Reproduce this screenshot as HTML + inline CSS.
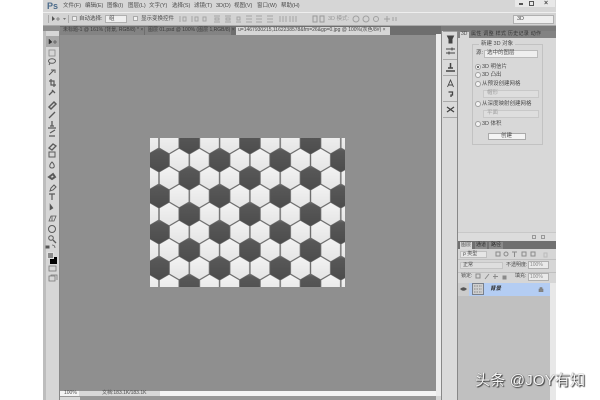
<!DOCTYPE html>
<html><head><meta charset="utf-8">
<style>
html,body{margin:0;padding:0;width:600px;height:400px;overflow:hidden;background:#fff}
body{position:relative;font-family:"Liberation Sans","Noto Sans CJK SC",sans-serif;color:#333}
div{position:absolute;box-sizing:border-box}
#app{left:0;top:0;width:600px;height:400px;filter:blur(.35px)}
.t{font-size:5.5px;line-height:7px;white-space:nowrap;color:#4a4a4a}
.r{width:6px;height:6px;border-radius:50%;background:#f2f2f2;border:1px solid #a0a0a0;left:475px}
</style></head><body>
<div id="app">
<div style="left:43px;top:0;width:513px;height:400px;background:#d6d6d6"></div>
<div class="t" style="left:47px;top:1px;font-size:9px;line-height:10px;font-weight:bold;color:#4a6a8a">Ps</div>
<div class="t" style="left:63px;top:3px">文件(F)</div>
<div class="t" style="left:85px;top:3px">编辑(E)</div>
<div class="t" style="left:107px;top:3px">图像(I)</div>
<div class="t" style="left:128px;top:3px">图层(L)</div>
<div class="t" style="left:149px;top:3px">文字(Y)</div>
<div class="t" style="left:172px;top:3px">选择(S)</div>
<div class="t" style="left:194px;top:3px">滤镜(T)</div>
<div class="t" style="left:216px;top:3px">3D(D)</div>
<div class="t" style="left:234px;top:3px">视图(V)</div>
<div class="t" style="left:257px;top:3px">窗口(W)</div>
<div class="t" style="left:281px;top:3px">帮助(H)</div>
<div style="left:515px;top:0;width:40px;height:7px;background:#e8e8e8"></div>
<div style="left:519px;top:3px;width:4px;height:2px;background:#555"></div>
<div style="left:529px;top:1px;width:5px;height:5px;border:1.500px solid #555"></div>
<div class="t" style="left:544px;top:0;font-size:7px;font-weight:bold">×</div>
<div style="left:43px;top:12px;width:513px;height:1px;background:#eee"></div>
<div style="left:43px;top:13px;width:513px;height:13px;background:#d3d3d3;border-bottom:1px solid #aaa"></div>
<div style="left:48px;top:15px;width:1px;height:8px;background:#aaa"></div>
<div style="left:68px;top:15px;width:1px;height:8px;background:#aaa"></div>
<svg style="position:absolute;left:50px;top:15px" width="16" height="8" viewBox="0 0 16 8"><path d="M2 1v5l3-2z" fill="#555"/><path d="M6 4h4M8 2v4" stroke="#777" stroke-width=".8"/><path d="M13 3h3l-1.500 2z" fill="#777"/></svg>
<div style="left:72px;top:16px;width:5px;height:5px;background:#f0f0f0;border:1px solid #aaa"></div>
<div class="t" style="left:79px;top:15.500px">自动选择:</div>
<div style="left:105px;top:15px;width:22px;height:8px;background:#efefef;border:1px solid #b0b0b0"></div>
<div class="t" style="left:109px;top:15.500px">组</div>
<div style="left:133px;top:16px;width:5px;height:5px;background:#f0f0f0;border:1px solid #aaa"></div>
<div class="t" style="left:141px;top:15.500px">显示变换控件</div>
<svg style="position:absolute;left:178px;top:15px" width="150" height="8" viewBox="0 0 150 8" fill="none" stroke="#a6a6a6" stroke-width="1">
<path d="M2 1v6M5 2h3v4H5zM14 1v6M17 2h3v4h-3zM25 2v4h3V2zM36 1h6M36 7h6M37 3h4v2h-4zM47 1h6M47 7h6M48 3h4v2h-4zM58 7h5M59 2h3v3h-3z"/>
<path d="M68 1h6M68 4h6M68 7h6M78 1h6M78 4h6M78 7h6M89 1h6M89 4h6M89 7h6M102 1v6M105 1v6M108 1v6M112 1v6M115 1v6M118 1v6"/>
<path d="M135 1h4v6h-4zM142 1h4v6h-4z" stroke="#999"/>
</svg>
<div class="t" style="left:328px;top:15.500px;color:#9a9a9a">3D 模式:</div>
<svg style="position:absolute;left:352px;top:15px" width="46" height="8" viewBox="0 0 46 8" fill="none" stroke="#a0a0a0"><circle cx="4" cy="4" r="3"/><circle cx="14" cy="4" r="3"/><circle cx="24" cy="4" r="2.500"/><path d="M32 4h6M35 1v6M41 2v4M44 2v4"/></svg>
<div style="left:513px;top:15px;width:41px;height:9px;background:#eeeeee;border:1px solid #b0b0b0"></div>
<div class="t" style="left:517px;top:16px">3D</div>
<div style="left:43px;top:26px;width:399px;height:9px;background:#6e6e6e"></div>
<div style="left:60px;top:27px;width:84px;height:8px;background:#838383"></div>
<div class="t" style="left:63px;top:27px;color:#3a3a3a;font-size:5px">未标题-1 @ 161% (背景, RGB/8) * ×</div>
<div style="left:145px;top:27px;width:86px;height:8px;background:#838383"></div>
<div class="t" style="left:148px;top:27px;color:#3a3a3a;font-size:5px">图层 01.psd @ 100% (图层 1,RGB/8) ×</div>
<div style="left:236px;top:27px;width:154px;height:8px;background:#d6d6d6"></div>
<div class="t" style="left:238px;top:27px;font-size:5px">u=1467930215,1162238578&amp;fm=26&amp;gp=0.jpg @ 100%(灰色/8#) ×</div>
<div style="left:43px;top:26px;width:17px;height:374px;background:#d6d6d6;border-right:1px solid #888"></div>
<div style="left:43px;top:30px;width:3px;height:370px;background:#bdbdbd"></div>
<div style="left:43px;top:26px;width:17px;height:5px;background:#8d8d8d"></div>
<div style="left:46px;top:36px;width:13px;height:11px;background:#a8a8a8"></div>
<svg style="position:absolute;left:43px;top:30px" width="17" height="260" viewBox="0 0 17 260" fill="none" stroke="#5a5a5a" stroke-width="1">
<path d="M6 9v5l3-2z" fill="#333" stroke="#333" stroke-width=".5"/><path d="M10 12h4M12 10v4" stroke-width=".8"/>
<rect x="6" y="20" width="6" height="6" stroke="#888" stroke-width=".8"/>
<ellipse cx="9" cy="31" rx="3.500" ry="2.300"/><path d="M7 33l-1 2"/>
<path d="M6 45l5-5M8 40h4v3"/>
<path d="M8 49v6h5M6 51h5v6" stroke-width="1.200"/>
<path d="M6 65l4-4M9 60l3 3" stroke-width="1.300"/>
<path d="M6 77l5-5 2 2-5 5z" stroke-width="1.500"/>
<path d="M6 88l6-6" stroke-width="1.300"/>
<path d="M5 98h8M7 96h4M9 91v5" stroke-width="1.300"/>
<path d="M6 106h6M7 103l5-3" stroke-width="1.200"/>
<path d="M6 118l4-4 3 2-4 4z" stroke-width="1.300"/>
<rect x="6" y="122" width="6" height="5"/>
<path d="M9 132c-3 3-3 6 0 6s3-3 0-6z"/>
<path d="M6 147l4-3 2 3-3 2z" stroke-width="2"/>
<path d="M7 161l1-3 3-3 2 2-3 3z"/>
<path d="M6 164h6M9 164v6" stroke-width="1.200"/>
<path d="M7 174v6l3-2z" fill="#555" stroke-width=".6"/>
<path d="M6 191l2-5h5l-2 5zM9 186v5" stroke-width=".8"/>
<circle cx="9" cy="199" r="3.500"/>
<circle cx="8" cy="208" r="2.300"/><path d="M10 210l3 3" stroke-width="1.300"/>
<path d="M3 216h3v2H3z" fill="#555"/><path d="M9 215c2 0 3 1 3 3" stroke-width=".8"/>
<rect x="6" y="236" width="7" height="5" stroke="#777" stroke-width=".8"/>
<path d="M6 246h6v5H6zM8 246v-1h6v5" stroke="#777" stroke-width=".8"/>
</svg>
<div style="left:50px;top:257px;width:7px;height:7px;background:#000"></div>
<div style="left:47px;top:252px;width:7px;height:7px;background:#8a8a8a;border:1px solid #e0e0e0"></div>
<div style="left:60px;top:35px;width:376px;height:356px;background:#8f8f8f"></div>
<div style="left:60px;top:391px;width:377px;height:5px;background:#f4f4f4"></div>
<div style="left:79px;top:391px;width:81px;height:5px;background:#d8d8d8"></div>
<div class="t" style="left:64px;top:390px;font-size:5px">100%</div>
<div class="t" style="left:102px;top:390px;font-size:5px">文档:183.1K/183.1K</div>
<div style="left:60px;top:396px;width:376px;height:4px;background:#989898"></div>
<div style="left:60px;top:397px;width:20px;height:3px;background:#d8d8d8"></div>
<div style="left:436px;top:34px;width:5px;height:362px;background:#ececec"></div>
<div style="left:441px;top:26px;width:17px;height:374px;background:#dadada;border-left:1px solid #888;border-right:1px solid #888"></div>
<div style="left:441px;top:26px;width:115px;height:5px;background:#7b7b7b"></div>
<svg style="position:absolute;left:443px;top:34px" width="15" height="84" viewBox="0 0 15 84" fill="none" stroke="#444" stroke-width="1">
<path d="M4.500 2h6l-1.500 3v4H6V5z" fill="#444"/>
<path d="M3 15h9M3 19h9" /><path d="M9 13.500v3M6 17.500v3" stroke-width="1"/>
<path d="M3 37h9M5 34h5M7.500 29v5" stroke-width="1.500"/>
<path d="M4.500 53l3-7 3 7M5.500 51h4" stroke-width=".9"/>
<path d="M5.500 58h4v3H8v2" stroke-width="1.300"/>
<path d="M4 73l7 5M11 73l-7 5" stroke-width="1.300"/>
</svg>
<div style="left:443px;top:31px;width:14px;height:1px;background:#a0a0a0"></div>
<div style="left:443px;top:59px;width:14px;height:1px;background:#aaa"></div>
<div style="left:443px;top:75px;width:14px;height:1px;background:#aaa"></div>
<div style="left:443px;top:101px;width:14px;height:1px;background:#aaa"></div>
<div style="left:443px;top:117px;width:14px;height:1px;background:#aaa"></div>
<div style="left:458px;top:31px;width:98px;height:369px;background:#d8d8d8"></div>
<div style="left:458px;top:31px;width:98px;height:7px;background:#828282"></div>
<div style="left:460px;top:32px;width:9px;height:6px;background:#d8d8d8"></div>
<div class="t" style="left:461px;top:31px;font-size:5px">3D</div>
<div class="t" style="left:471px;top:31px;font-size:5px;letter-spacing:.3px;color:#333">属性 调整 样式 历史记录 动作</div>
<div style="left:472px;top:44px;width:71px;height:101px;border:1px solid #c2c2c2"></div>
<div class="t" style="left:479px;top:41px;background:#d8d8d8;padding:0 2px">新建 3D 对象</div>
<div class="t" style="left:476px;top:50px">源:</div>
<div style="left:484px;top:50px;width:54px;height:8px;background:#efefef;border:1px solid #bbb"></div>
<div class="t" style="left:487px;top:50px">选中的图层</div>
<div class="r" style="top:64px"></div>
<div style="left:477px;top:66px;width:2px;height:2px;border-radius:50%;background:#444"></div>
<div class="t" style="left:482px;top:63.500px">3D 明信片</div>
<div class="r" style="top:72px"></div>
<div class="t" style="left:482px;top:71.500px">3D 凸出</div>
<div class="r" style="top:81px"></div>
<div class="t" style="left:482px;top:80.500px">从预设创建网格</div>
<div style="left:483px;top:90px;width:56px;height:8px;background:#dedede;border:1px solid #c8c8c8"></div>
<div class="t" style="left:487px;top:90px;color:#a0a0a0">帽形</div>
<div class="r" style="top:101px"></div>
<div class="t" style="left:482px;top:100.500px">从深度映射创建网格</div>
<div style="left:483px;top:110px;width:56px;height:8px;background:#dedede;border:1px solid #c8c8c8"></div>
<div class="t" style="left:487px;top:110px;color:#a0a0a0">平面</div>
<div class="r" style="top:121px"></div>
<div class="t" style="left:482px;top:120.500px">3D 体积</div>
<div style="left:488px;top:133px;width:38px;height:7px;background:#f4f4f4;border:1px solid #aaa"></div>
<div class="t" style="left:501px;top:133px">创建</div>
<div style="left:458px;top:232px;width:98px;height:9px;background:#dcdcdc;border-top:1px solid #c8c8c8"></div>
<div style="left:532px;top:235px;width:4px;height:4px;border:1px solid #999"></div>
<div style="left:541px;top:235px;width:4px;height:4px;border:1px solid #999"></div>
<div style="left:458px;top:241px;width:98px;height:8px;background:#707070"></div>
<div style="left:460px;top:242px;width:12px;height:7px;background:#d8d8d8"></div>
<div class="t" style="left:461px;top:242px;font-size:5px">图层</div>
<div style="left:475px;top:242px;width:12px;height:7px;background:#8a8a8a"></div>
<div class="t" style="left:476px;top:242px;font-size:5px;color:#2a2a2a">通道</div>
<div style="left:489px;top:242px;width:14px;height:7px;background:#8a8a8a"></div>
<div class="t" style="left:491px;top:242px;font-size:5px;color:#2a2a2a">路径</div>
<div style="left:458px;top:249px;width:92px;height:34px;background:#d6d6d6"></div>
<div style="left:550px;top:249px;width:6px;height:34px;background:#d6d6d6"></div>
<div style="left:460px;top:251px;width:27px;height:7px;background:#e6e6e6;border:1px solid #c0c0c0"></div>
<div class="t" style="left:463px;top:251px;font-size:5px">ρ 类型</div>
<svg style="position:absolute;left:495px;top:251px" width="55" height="7" viewBox="0 0 55 7" fill="none" stroke="#8a8a8a"><rect x="1" y="1" width="4" height="4"/><circle cx="11" cy="3" r="2"/><path d="M17 1h5M19.500 1v5"/><rect x="27" y="1" width="4" height="4"/><path d="M36 1h4v4h-4z"/><rect x="49" y="2" width="3" height="4" stroke="#bbb"/></svg>
<div style="left:458px;top:259px;width:98px;height:1px;background:#c0c0c0"></div>
<div style="left:460px;top:262px;width:43px;height:7px;background:#dedede;border:1px solid #c4c4c4"></div>
<div class="t" style="left:463px;top:262px;font-size:5px">正常</div>
<div class="t" style="left:506px;top:262px;font-size:5px">不透明度:</div>
<div style="left:528px;top:261px;width:21px;height:8px;background:#eaeaea;border:1px solid #b0b0b0"></div>
<div class="t" style="left:530px;top:261.500px;font-size:5px;color:#888">100%</div>
<div style="left:458px;top:272px;width:98px;height:1px;background:#c0c0c0"></div>
<div class="t" style="left:461px;top:273px;font-size:5px">锁定:</div>
<svg style="position:absolute;left:475px;top:273px" width="32" height="7" viewBox="0 0 32 7" fill="none" stroke="#8a8a8a"><rect x="1" y="1" width="4" height="4"/><path d="M10 6l4-5M20 1v5M18 3.500h5"/><rect x="28" y="3" width="3" height="3" fill="#8a8a8a"/></svg>
<div class="t" style="left:515px;top:273px;font-size:5px">填充:</div>
<div style="left:528px;top:273px;width:21px;height:8px;background:#eaeaea;border:1px solid #b0b0b0"></div>
<div class="t" style="left:530px;top:273.500px;font-size:5px;color:#888">100%</div>
<div style="left:458px;top:283px;width:92px;height:117px;background:#c0c0c0"></div>
<div style="left:469px;top:283px;width:81px;height:13px;background:#b4cdf3"></div>
<div style="left:458px;top:283px;width:11px;height:13px;background:#cccccc"></div>
<div style="left:550px;top:283px;width:6px;height:117px;background:#e8e8e8"></div>
<svg style="position:absolute;left:460px;top:286px" width="7" height="6" viewBox="0 0 7 6"><path d="M0 3Q3.500-.5 7 3Q3.500 6.500 0 3z" fill="#555"/></svg>
<svg style="position:absolute;left:472px;top:283px" width="12" height="12" viewBox="0 0 12 12"><rect x=".5" y=".5" width="11" height="11" fill="#cfcfcf" stroke="#333" stroke-dasharray="1 1"/><path d="M2 3h8M2 6h8M2 9h8" stroke="#888" stroke-dasharray="1.500 1"/></svg>
<div class="t" style="left:490px;top:285.500px;font-style:italic;font-weight:bold;color:#2a2a2a">背景</div>
<svg style="position:absolute;left:538px;top:286px" width="6" height="6" viewBox="0 0 6 6"><path d="M1 3h4v3H1zM2 3V1.500h2V3" fill="#888" stroke="#777" stroke-width=".6"/></svg>
<svg style="position:absolute;left:150px;top:138px" width="195" height="149" viewBox="150 138 195 149">
<defs>
<linearGradient id="dk" x1="0" y1="0" x2="0" y2="1"><stop offset="0" stop-color="#6f6f6f"/><stop offset=".12" stop-color="#585858"/><stop offset="1" stop-color="#4c4c4c"/></linearGradient>
<linearGradient id="wh" x1="0" y1="0" x2="0" y2="1"><stop offset="0" stop-color="#f3f3f3"/><stop offset="1" stop-color="#e4e4e4"/></linearGradient>
<polygon id="w" points="0,-11.200 9.400,-5.800 9.400,5.800 0,11.200 -9.400,5.800 -9.400,-5.800" fill="url(#wh)"/>
<polygon id="d" points="0,-12 10,-6.200 10,6.200 0,12 -10,6.200 -10,-6.200" fill="url(#dk)"/>
<pattern id="hx" patternUnits="userSpaceOnUse" x="159" y="160" width="60.600" height="36">
<rect x="0" y="0" width="60.600" height="36" fill="#6e6e6e"/>
<use href="#w" x="20.200" y="0"/><use href="#w" x="40.400" y="0"/>
<use href="#w" x="20.200" y="36"/><use href="#w" x="40.400" y="36"/>
<use href="#w" x="10.100" y="18"/><use href="#w" x="50.500" y="18"/><use href="#w" x="-10.100" y="18"/><use href="#w" x="70.700" y="18"/>
<use href="#d" x="0" y="0"/><use href="#d" x="60.600" y="0"/>
<use href="#d" x="0" y="36"/><use href="#d" x="60.600" y="36"/>
<use href="#d" x="30.300" y="18"/>
</pattern>
</defs>
<rect x="150" y="138" width="195" height="149" fill="url(#hx)"/>
</svg>
</div>
<div style="left:475px;top:372px;font-size:15px;line-height:18px;letter-spacing:.2px;white-space:nowrap;color:#f4f4f4;text-shadow:1px 1px 1px #333,0 0 1px #555">头条 @JOY有知</div>
</body></html>
